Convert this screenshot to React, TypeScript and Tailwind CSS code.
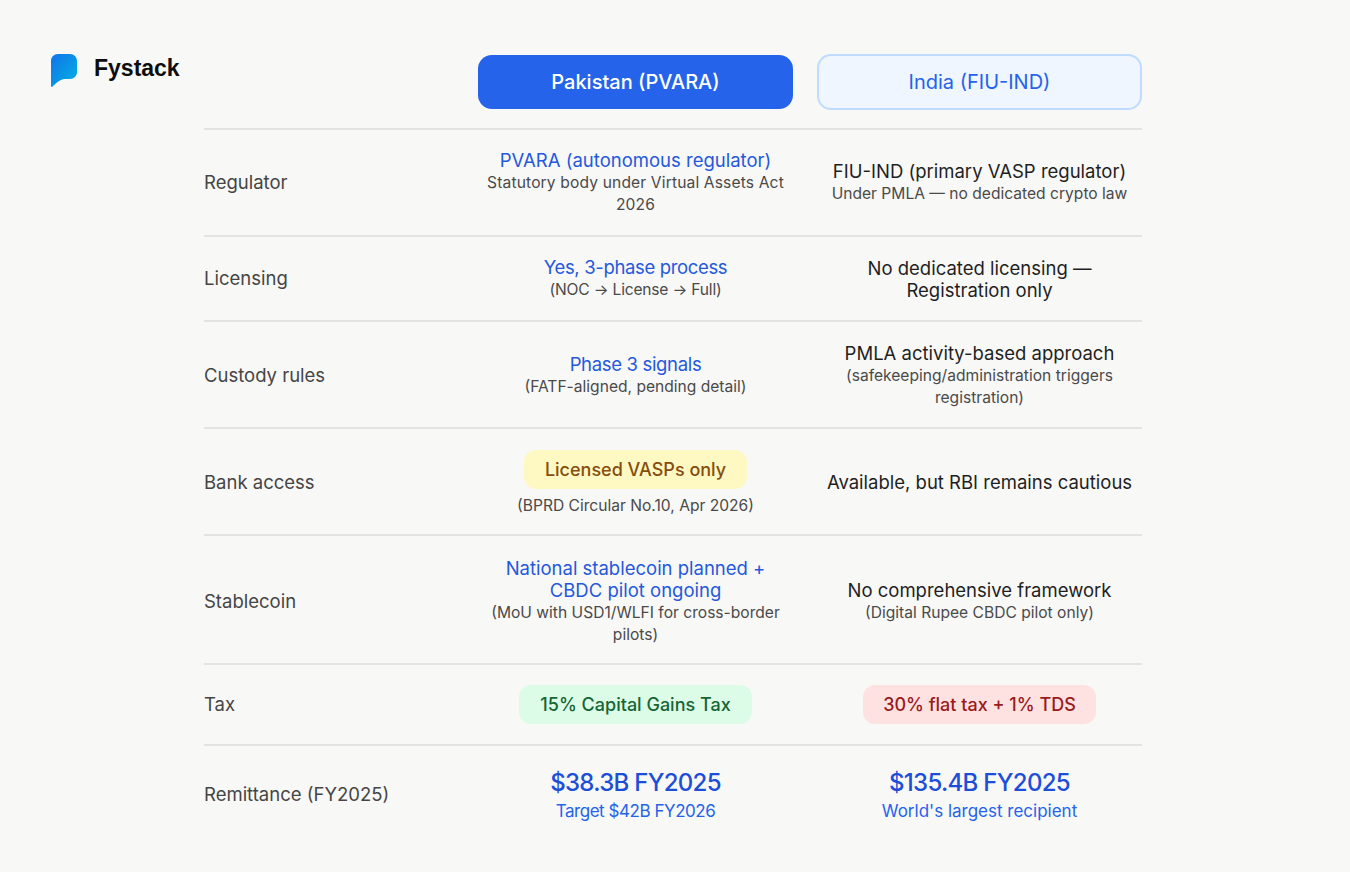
import React from "react";

const font = { blue: "text-[#2558dc]", dark: "text-[#1f1f1f]", sub: "text-[#4a4a4a]" };

function Main({ children, blue, className = "" }: { children: React.ReactNode; blue?: boolean; className?: string }) {
  return <div className={`text-[18.5px] leading-[22px] ${blue ? font.blue : font.dark} ${className}`}>{children}</div>;
}

function Sub({ children, className = "" }: { children: React.ReactNode; className?: string }) {
  return <div className={`mt-[1px] text-[15.6px] leading-[22px] ${font.sub} ${className}`}>{children}</div>;
}

function Pill({ className, children }: { className: string; children: React.ReactNode }) {
  return <div className={`inline-flex items-center justify-center h-[39px] rounded-[12px] text-[18px] font-medium ${className}`}>{children}</div>;
}

function Row({ label, h, left, right }: { label: string; h: string; left: React.ReactNode; right: React.ReactNode }) {
  return (
    <div className={`grid grid-cols-[250px_315px_325px] gap-x-[24px] items-center border-t-2 border-[#e3e3e1] ${h}`}>
      <div className="text-[18.5px] text-[#454545]">{label}</div>
      <div className="text-center">{left}</div>
      <div className="text-center">{right}</div>
    </div>
  );
}

export default function App() {
  return (
    <div className="min-h-[872px] bg-[#f8f8f7] flex pl-[51px] pt-[54px] font-['Inter',sans-serif]">
      <div className="w-[153px] flex items-start gap-[17px] shrink-0">
        <svg width="26" height="33" viewBox="0 0 26 33">
          <defs>
            <linearGradient id="fy" x1="0" y1="0" x2="1" y2="1">
              <stop offset="0" stopColor="#1272e8" />
              <stop offset="1" stopColor="#00b4e4" />
            </linearGradient>
          </defs>
          <path d="M7 0H19C23 0 26 3 26 7V18C26 22 23 25 19 25H13C8 26 4 30 1 33C0.4 33 0 32.6 0 32V7C0 3 3 0 7 0Z" fill="url(#fy)" />
        </svg>
        <div className="font-['Liberation_Sans',sans-serif] font-bold text-[23px] leading-[28px] text-[#0d0d0d]">Fystack</div>
      </div>
      <div className="w-[938px]">
        <div className="grid grid-cols-[250px_315px_325px] gap-x-[24px] items-start h-[74px]">
          <div />
          <div className="mt-[1px] h-[54px] rounded-[14px] bg-[#2563eb] text-white text-[20px] font-medium flex items-center justify-center">Pakistan (PVARA)</div>
          <div className="h-[56px] rounded-[14px] bg-[#eff6ff] border-2 border-[#bfdbfe] text-[#2563eb] text-[20px] flex items-center justify-center">India (FIU-IND)</div>
        </div>
        <Row
          label="Regulator"
          h="h-[107px]"
          left={<><Main blue>PVARA (autonomous regulator)</Main><Sub className="tracking-[0.14px]">Statutory body under Virtual Assets Act 2026</Sub></>}
          right={<><Main>FIU-IND (primary VASP regulator)</Main><Sub>Under PMLA — no dedicated crypto law</Sub></>}
        />
        <Row
          label="Licensing"
          h="h-[85px]"
          left={<><Main blue className="tracking-[-0.35px]">Yes, 3-phase process</Main><Sub className="tracking-[-0.2px]">(NOC → License → Full)</Sub></>}
          right={<Main>No dedicated licensing —<br />Registration only</Main>}
        />
        <Row
          label="Custody rules"
          h="h-[107px] pt-[2px]"
          left={<><Main blue className="tracking-[-0.33px]">Phase 3 signals</Main><Sub>(FATF-aligned, pending detail)</Sub></>}
          right={<><Main>PMLA activity-based approach</Main><Sub>(safekeeping/administration triggers<br />registration)</Sub></>}
        />
        <Row
          label="Bank access"
          h="h-[107px] pt-[2px]"
          left={<div className="pt-[2px]"><Pill className="w-[223px] bg-[#fef9c3] text-[#854d0e]">Licensed VASPs only</Pill><div className="mt-[6px]"><Sub>(BPRD Circular No.10, Apr 2026)</Sub></div></div>}
          right={<Main className="pb-[2px]">Available, but RBI remains cautious</Main>}
        />
        <Row
          label="Stablecoin"
          h="h-[129px] pt-[4px]"
          left={<><Main blue>National stablecoin planned +<br />CBDC pilot ongoing</Main><Sub>(MoU with USD1/WLFI for cross-border<br />pilots)</Sub></>}
          right={<><Main>No comprehensive framework</Main><Sub>(Digital Rupee CBDC pilot only)</Sub></>}
        />
        <Row
          label="Tax"
          h="h-[81px]"
          left={<Pill className="w-[233px] bg-[#dcfce7] text-[#166534]">15% Capital Gains Tax</Pill>}
          right={<Pill className="w-[233px] bg-[#fee2e2] text-[#991b1b]">30% flat tax + 1% TDS</Pill>}
        />
        <Row
          label="Remittance (FY2025)"
          h="h-[100px]"
          left={<><div className="text-[24px] leading-[32px] font-medium tracking-[-0.7px] text-[#1d4ed8]">$38.3B FY2025</div><div className="text-[17px] leading-[24px] tracking-[-0.45px] text-[#2563eb]">Target $42B FY2026</div></>}
          right={<><div className="text-[24px] leading-[32px] font-medium tracking-[-0.7px] text-[#1d4ed8]">$135.4B FY2025</div><div className="text-[17px] leading-[24px] text-[#2563eb]">World's largest recipient</div></>}
        />
      </div>
    </div>
  );
}
